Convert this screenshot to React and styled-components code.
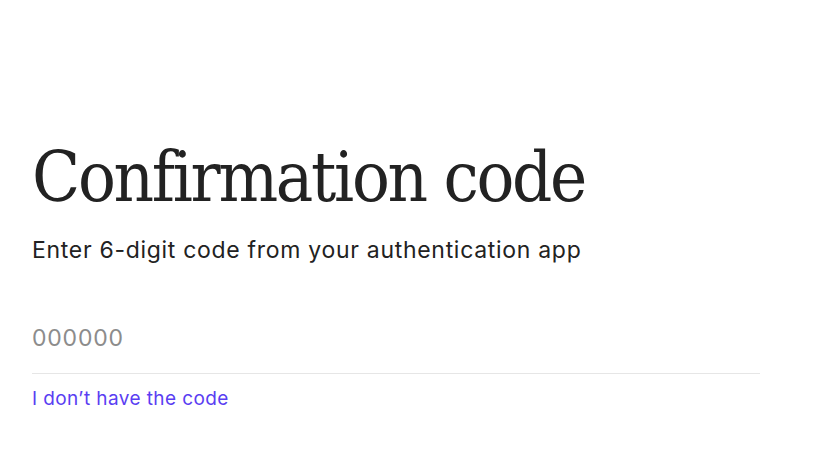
import React, { useState } from "react";
import styled, { createGlobalStyle } from "styled-components";

const GlobalStyle = createGlobalStyle`
    body {
        margin: 0;
        background: #ffffff;
        font-family: "Inter", "Roboto", sans-serif;
        color: #222222;
    }
`;

export default function App() {
    const [code, setCode] = useState("");

    return (
        <>
            <GlobalStyle />
            <Page>
                <Title>Confirmation code</Title>
                <Subtitle>Enter 6-digit code from your authentication app</Subtitle>
                <CodeInput
                    value={code}
                    onChange={(e) => setCode(e.target.value)}
                    placeholder="000000"
                    maxLength={6}
                />
                <HelpLink href="#">I don’t have the code</HelpLink>
            </Page>
        </>
    );
}

const Page = styled.main`
    display: flex;
    flex-direction: column;
    align-items: flex-start;
    width: 728px;
    padding: 135px 0 0 32px;
`;

const Title = styled.h1`
    margin: 0;
    font-family: "DejaVu Serif Condensed", "DejaVu Serif", serif;
    font-weight: 400;
    font-size: 70px;
    line-height: 84px;
    letter-spacing: -2.3px;
    color: #222222;
`;

const Subtitle = styled.p`
    margin: 16px 0 0;
    font-size: 23px;
    line-height: 30px;
    letter-spacing: 0.7px;
    color: #222222;
`;

const CodeInput = styled.input`
    box-sizing: border-box;
    width: 100%;
    margin-top: 46px;
    padding: 12px 0 20px;
    border: none;
    border-bottom: 1px solid #e6e6e6;
    outline: none;
    font-family: "Inter", "Roboto", sans-serif;
    font-size: 23px;
    line-height: 30px;
    letter-spacing: 0.8px;
    color: #222222;

    &::placeholder {
        color: #8c8c8c;
    }
`;

const HelpLink = styled.a`
    margin-top: 12px;
    font-size: 19px;
    line-height: 26px;
    letter-spacing: 0.4px;
    color: #5a3ef2;
    text-decoration: none;
`;
